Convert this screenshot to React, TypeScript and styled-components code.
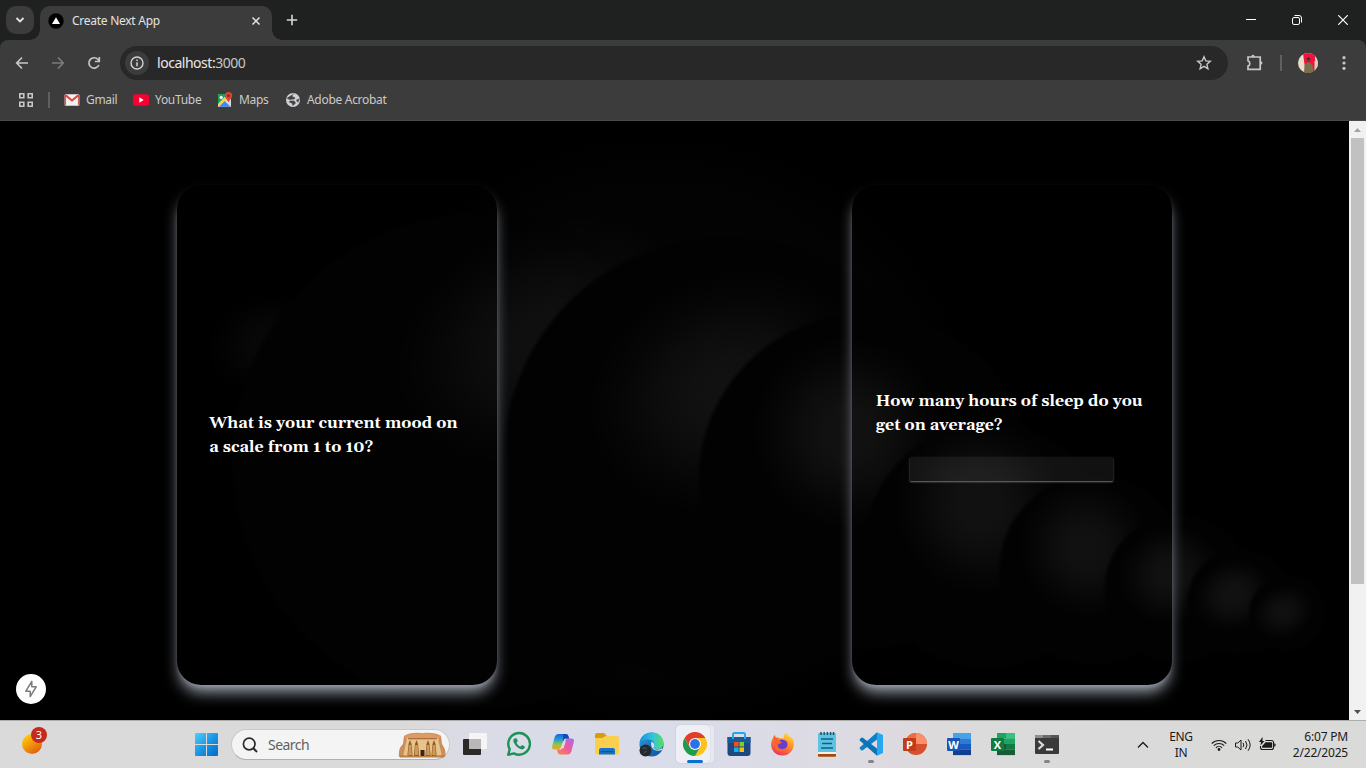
import React from "react";
import styled, { createGlobalStyle } from "styled-components";

const Global = createGlobalStyle`
  * { box-sizing: border-box; }
  body { margin: 0; background: #000; overflow: hidden; font-family: "Open Sans", "Noto Sans", sans-serif; }
  svg { display: block; flex: none; }
`;

const ui = `"Noto Sans", "Open Sans", sans-serif`;

const Screen = styled.div`
  width: 1366px;
  height: 768px;
  display: flex;
  flex-direction: column;
  overflow: hidden;
`;

/* ---------- browser chrome ---------- */
const TabStrip = styled.header`
  height: 40px;
  flex: none;
  background: #1f2120;
  display: flex;
  padding: 6px 0 0 6px;
`;
const TabSearch = styled.button`
  width: 28px;
  height: 28px;
  border: 0;
  padding: 0;
  border-radius: 10px;
  background: #3c3c3c;
  display: grid;
  place-items: center;
`;
const Tab = styled.div`
  position: relative;
  width: 232px;
  height: 34px;
  margin-left: 6px;
  padding: 0 10px 5px 8px;
  border-radius: 10px 10px 0 0;
  background: #3c3c3c;
  display: flex;
  align-items: center;
  &::before, &::after {
    content: "";
    position: absolute;
    bottom: 0;
    width: 10px;
    height: 10px;
  }
  &::before { left: -10px; background: radial-gradient(circle at 0 0, transparent 9.5px, #3c3c3c 10px); }
  &::after { right: -10px; background: radial-gradient(circle at 100% 0, transparent 9.5px, #3c3c3c 10px); }
`;
const TabTitle = styled.span`
  flex: 1;
  margin-left: 8px;
  font: 12px/16px ${ui};
  letter-spacing: -0.27px;
  color: #e3e3e3;
`;
const NewTab = styled.div`
  margin-left: 12px;
  height: 28px;
  display: flex;
  align-items: center;
`;
const WindowButtons = styled.div`
  margin-left: auto;
  height: 28px;
  display: flex;
`;
const WindowButton = styled.div`
  width: 46px;
  display: grid;
  place-items: center;
`;

const ToolbarBack = styled.div`
  flex: none;
  background: #1f2120;
`;
const Toolbar = styled.div`
  height: 81px;
  border-radius: 8px 8px 0 0;
  background: #3c3c3c;
  border-bottom: 1px solid #4b4b4b;
`;
const NavRow = styled.div`
  height: 46px;
  padding: 6px 0 6px 14px;
  display: flex;
  align-items: center;
`;
const NavButton = styled.div<{ $gap: number }>`
  margin-right: ${(p) => p.$gap}px;
`;
const AddressBar = styled.div`
  width: 1108px;
  height: 34px;
  flex: none;
  border-radius: 17px;
  background: #282828;
  display: flex;
  align-items: center;
  padding: 0 16px 0 5px;
`;
const InfoChip = styled.span`
  width: 24px;
  height: 24px;
  border-radius: 50%;
  background: #3c3c3c;
  display: grid;
  place-items: center;
`;
const Url = styled.span`
  flex: 1;
  margin-left: 8px;
  font: 14px/20px ${ui};
  letter-spacing: -0.47px;
  color: #e8e8e8;
  span { color: #c4c7c5; }
`;
const NavTail = styled.div`
  display: flex;
  align-items: center;
  margin-left: 17px;
`;
const Rule = styled.span<{ $left: number; $right: number }>`
  width: 2px;
  height: 16px;
  flex: none;
  background: #606060;
  margin: 0 ${(p) => p.$right}px 0 ${(p) => p.$left}px;
`;
const BookmarkRow = styled.div`
  height: 28px;
  display: flex;
  align-items: center;
  padding-left: 18px;
`;
const Bookmark = styled.div<{ $width: number }>`
  width: ${(p) => p.$width}px;
  display: flex;
  align-items: center;
  gap: 6px;
  font: 12px/16px ${ui};
  letter-spacing: -0.3px;
  color: #c9cbca;
  white-space: nowrap;
`;

/* ---------- page ---------- */
const Viewport = styled.div`
  height: 599px;
  flex: none;
  display: flex;
`;
const Page = styled.main`
  position: relative;
  width: 1349px;
  background: #000;
  overflow: hidden;
`;
const Backdrop = styled.div`
  position: absolute;
  inset: 0;
`;
const Cards = styled.div`
  position: relative;
  display: grid;
  grid-template-columns: 1fr 1fr;
  justify-items: center;
  padding-top: 64px;
`;
const Card = styled.section<{ $pad: number }>`
  width: 320px;
  height: 500px;
  padding: 0 ${(p) => p.$pad}px;
  border-radius: 24px;
  display: flex;
  flex-direction: column;
  justify-content: center;
  box-shadow: 0 10px 15px -3px #9ca3af, 0 4px 6px -4px #9ca3af;
`;
const Question = styled.h2`
  margin: 0;
  font: bold 16px/24px Gelasio, Georgia, "DejaVu Serif", serif;
  color: #fff;
  white-space: nowrap;
`;
const Answer = styled.input`
  width: 203px;
  height: 24px;
  margin: 20px auto 0 34px;
  border: 0;
  border-radius: 1px;
  background: rgba(255, 255, 255, 0.065);
  box-shadow: 0 1px 2px 0 #71718a;
  color: #fff;
`;
const DevBadge = styled.div`
  position: absolute;
  left: 16px;
  top: 553px;
  width: 30px;
  height: 30px;
  border-radius: 50%;
  background: #fff;
  display: grid;
  place-items: center;
`;
const ScrollBar = styled.div`
  width: 17px;
  background: #f1f1f1;
  display: flex;
  flex-direction: column;
  align-items: center;
`;
const ScrollArrow = styled.div`
  height: 17px;
  display: grid;
  place-items: center;
`;
const ScrollTrack = styled.div`
  flex: 1;
`;
const Thumb = styled.div`
  width: 13px;
  height: 446px;
  background: #c1c1c1;
`;

/* ---------- taskbar ---------- */
const Taskbar = styled.footer`
  height: 48px;
  flex: none;
  border-top: 1px solid #adadad;
  background: linear-gradient(90deg, #dadada 0, #dadada 400px, #dadbe6 470px, #d9dcea 680px, #dddbe3 830px, #dcdadb 940px, #dadad9 1366px);
  display: flex;
  align-items: flex-start;
`;
const Weather = styled.div`
  position: relative;
  width: 184px;
  height: 47px;
  padding: 13px 0 0 22px;
`;
const Sun = styled.div`
  width: 20px;
  height: 20px;
  border-radius: 50%;
  background: linear-gradient(145deg, #fdc70c 15%, #f08c0a 55%, #dd5b12 90%);
`;
const Count = styled.span`
  position: absolute;
  left: 31px;
  top: 6px;
  width: 16px;
  height: 16px;
  border-radius: 50%;
  background: #c42b1c;
  color: #fff;
  font: 11px/16px ${ui};
  text-align: center;
`;
const Slot = styled.div`
  position: relative;
  width: 44px;
  height: 46px;
  display: grid;
  place-items: center;
`;
const ActiveBack = styled.div`
  position: absolute;
  left: 3px;
  top: 4px;
  width: 38px;
  height: 38px;
  border-radius: 4px;
  background: #e8e9f0;
  box-shadow: 0 0 1px #b8b9c4;
  &::before {
    content: "";
    position: absolute;
    inset: 0 4px 0 0;
    border-radius: 4px;
    background: #eeeff5;
    box-shadow: 0 0 1px #a9aab8;
  }
`;
const Indicator = styled.i<{ $on?: boolean }>`
  position: absolute;
  bottom: 4px;
  left: ${(p) => (p.$on ? 14 : 19)}px;
  width: ${(p) => (p.$on ? 16 : 6)}px;
  height: 3px;
  border-radius: 2px;
  background: ${(p) => (p.$on ? "#0a6fd0" : "#858587")};
`;
const IconLayer = styled.div`
  position: relative;
`;
const SearchPill = styled.div`
  width: 219px;
  height: 31px;
  margin: 8px 2px 0 3px;
  border-radius: 16px;
  border: 1px solid #c9c9cb;
  border-bottom-color: #b0b0b3;
  background: #f4f4f4;
  display: flex;
  align-items: center;
  padding: 0 3px 0 10px;
  font: 14px/20px ${ui};
  letter-spacing: -0.55px;
  color: #5f5f5f;
  span { flex: 1; margin-left: 10px; }
`;
const Tray = styled.div`
  height: 47px;
  margin-left: auto;
  padding-right: 18px;
  display: flex;
  align-items: center;
  color: #1b1b1b;
  font: 12px/16px ${ui};
`;
const Language = styled.div`
  width: 32px;
  margin: 0 14px 0 16px;
  text-align: center;
  letter-spacing: -0.35px;
`;
const Clock = styled.div`
  width: 60px;
  margin-left: 12px;
  letter-spacing: -0.2px;
  white-space: nowrap;
  display: flex;
  flex-direction: column;
  align-items: flex-end;
`;
const Apps = styled.div`
  display: flex;
  margin-left: 1px;
`;

type Orb = { cx: number; cy: number; r: number; reach?: number; gx: number; gy: number; rx: number; ry: number; a: number };
const orbs: Orb[] = [
  { cx: 300, cy: 300, r: 0, reach: 200, gx: 266, gy: 222, rx: 62, ry: 52, a: 0.028 },
  { cx: 480, cy: 340, r: 250, reach: 400, gx: 548, gy: 220, rx: 160, ry: 118, a: 0.054 },
  { cx: 727, cy: 339, r: 226, gx: 728, gy: 270, rx: 145, ry: 118, a: 0.06 },
  { cx: 866, cy: 360, r: 170, gx: 848, gy: 312, rx: 96, ry: 98, a: 0.062 },
  { cx: 988, cy: 425, r: 125, gx: 980, gy: 385, rx: 86, ry: 92, a: 0.062 },
  { cx: 1094, cy: 449, r: 97, gx: 1086, gy: 427, rx: 68, ry: 72, a: 0.06 },
  { cx: 1178, cy: 468, r: 76, gx: 1170, gy: 453, rx: 54, ry: 50, a: 0.06 },
  { cx: 1240, cy: 481, r: 55, gx: 1233, gy: 474, rx: 42, ry: 36, a: 0.062 },
  { cx: 1287, cy: 492, r: 40, gx: 1283, gy: 491, rx: 32, ry: 27, a: 0.055 },
];

const Orbs = () => (
  <svg width="1349" height="599">
    <defs>
      <radialGradient id="haze">
        <stop offset="0" stopColor="#040404" />
        <stop offset=".8" stopColor="#030303" />
        <stop offset="1" stopColor="#000" />
      </radialGradient>
      <radialGradient id="glow">
        <stop offset="0" stopColor="#fff" />
        <stop offset=".25" stopColor="#fff" stopOpacity=".95" />
        <stop offset=".5" stopColor="#fff" stopOpacity=".66" />
        <stop offset=".75" stopColor="#fff" stopOpacity=".27" />
        <stop offset="1" stopColor="#fff" stopOpacity="0" />
      </radialGradient>
      {orbs.map((o, i) => (
        <React.Fragment key={i}>
          <clipPath id={`c${i}`}><circle cx={o.cx} cy={o.cy} r={o.reach ?? o.r - 1} /></clipPath>
          <radialGradient id={`b${i}`} gradientUnits="userSpaceOnUse" cx={o.cx} cy={o.cy} r={o.r}>
            <stop offset="0" stopColor="#020202" />
            <stop offset={o.r ? 1 - 5 / o.r : 0} stopColor="#020202" />
            <stop offset="1" stopColor="#020202" stopOpacity="0" />
          </radialGradient>
        </React.Fragment>
      ))}
    </defs>
    <ellipse cx="660" cy="310" rx="320" ry="300" fill="url(#haze)" />
    {orbs.map((o, i) => (
      <g key={i}>
        <circle cx={o.cx} cy={o.cy} r={o.r} fill={`url(#b${i})`} />
        <g clipPath={`url(#c${i})`}>
          <ellipse cx={o.gx} cy={o.gy} rx={o.rx} ry={o.ry} fill="url(#glow)" opacity={o.a} transform={`rotate(-25 ${o.gx} ${o.gy})`} />
        </g>
      </g>
    ))}
  </svg>
);

const stroke = (c: string, w = 1.6) => ({ fill: "none", stroke: c, strokeWidth: w });

const Avatar = () => (
  <svg width="20" height="20" viewBox="0 0 20 20">
    <clipPath id="av"><circle cx="10" cy="10" r="10" /></clipPath>
    <g clipPath="url(#av)">
      <rect width="20" height="20" fill="#e9dccb" />
      <path d="M5 0h12v5l1 8v7H8L6 8z" fill="#ee1240" />
      <path d="M16.500 8h4v12h-4z" fill="#d9cdb9" />
      <circle cx="10.500" cy="7" r="2" fill="#6a4032" />
      <path d="M6 20l.500-8 3-2.500h2l3 2.500 1 8z" fill="#76714a" />
      <path d="M8.300 6q2.200-3 4.400 0l-1 .3H9.300z" fill="#3a2320" />
    </g>
  </svg>
);

const Temple = () => (
  <svg width="48" height="26" viewBox="0 0 48 26">
    <path d="M1 25Q0 16 5 12L6 4Q12 0 24 1Q37 0 43 4L44 12Q49 19 47 25z" fill="#c98f5a" />
    <path d="M6 4Q24-2 43 4L41 7H8z" fill="#dd9a62" />
    <path d="M9 6h31l4 19H5z" fill="#e8c48a" />
    <path d="M10 6h29v1.300H10z" fill="#a9713f" />
    {[12, 18.5, 30, 36].map((x) => (
      <g key={x}>
        <path d={`M${x - 2.6} 24L${x - 1.5} 12L${x} 8l1.500 4l1.100 12z`} fill="#8f5b2a" />
        <path d={`M${x - 1.2} 13h2.400l.6 10h-3.600z`} fill="#cf9a58" />
      </g>
    ))}
    <path d="M22.500 18h4v7h-4z" fill="#3e2412" />
    <path d="M2 23q22 2 44 0v2.500H2z" fill="#ba8246" />
  </svg>
);

const WindowsLogo = () => (
  <svg width="23" height="23" viewBox="0 0 23 23">
    <defs>
      <linearGradient id="win" x1="0" y1="0" x2="1" y2="1">
        <stop stopColor="#4fd0fb" /><stop offset=".5" stopColor="#1a96e4" /><stop offset="1" stopColor="#0669c8" />
      </linearGradient>
    </defs>
    <path d="M1 0h10v11H0V1q0-1 1-1zM12 0h10q1 0 1 1v10H12zM0 12h11v11H1q-1 0-1-1zM12 12h11v10q0 1-1 1H12z" fill="url(#win)" />
  </svg>
);

const TaskView = () => (
  <svg width="24" height="22" viewBox="0 0 24 22">
    <rect y="6" width="18" height="16" rx="1" fill="#2b2a29" />
    <rect x="6" width="18" height="16" rx="1" fill="#f5f5f5" />
    <path d="M6 6h12v10H6z" fill="#b9b8b7" />
  </svg>
);

const WhatsApp = () => (
  <svg width="26" height="26" viewBox="0 0 26 26">
    <path d="M2.200 23.800l1.500-5.600A10.800 10.800 0 1 1 8 22.400z" {...stroke("#1d9158", 2.4)} strokeLinejoin="round" />
    <path d="M9.300 7.200c-1.900.2-2.500 2.300-1.500 4.300 1.500 3.300 4 5.900 7.400 6.800 2.100.5 3.700-.7 3.600-2.700l-2.700-1.500-1.600 1.500c-2-.8-3.200-2-4-3.900l1.300-1.400-1-2.800z" fill="#1d9158" />
  </svg>
);

const Copilot = () => (
  <svg width="22" height="22" viewBox="0 0 24 24">
    <defs>
      <linearGradient id="cp1" x1="0" y1="0" x2="0" y2="1"><stop stopColor="#1a62d8" /><stop offset=".35" stopColor="#1d9bd8" /><stop offset=".65" stopColor="#8ac64a" /><stop offset="1" stopColor="#f9a11b" /></linearGradient>
      <linearGradient id="cp2" x1="1" y1="0" x2="0" y2="1"><stop stopColor="#b066ee" /><stop offset=".5" stopColor="#ee5a9d" /><stop offset="1" stopColor="#fb8b42" /></linearGradient>
    </defs>
    <path d="M7 1h8q2 0 2.700 2l1 3h-4q-1.500 0-2 1.700L9.800 15.500Q9 18 6.500 18H3Q-.7 18 .3 14L3 4Q4 1 7 1z" fill="url(#cp1)" />
    <path d="M17 23.500H9q-2 0-2.700-2l-1-3.500h4q1.500 0 2-1.700L14.200 9Q15 6 17.500 6H21q3.700 0 2.700 4L21 20.500q-1 3-4 3z" fill="url(#cp2)" />
    <path d="M12 1h3q2 0 2.700 2l1 3h-4q-1.500 0-2 1.700L12 10z" fill="#1746b8" />
    <path d="M13.700 9L11.300 16.500" {...stroke("#dcdce9", 2.6)} />
  </svg>
);

const Explorer = () => (
  <svg width="24" height="22" viewBox="0 0 24 22">
    <path d="M0 2q0-2 2-2h7l3 3v4H0z" fill="#dc9a0e" />
    <path d="M9 4l2-1h11q2 0 2 2v15q0 1.500-1.500 1.500h-21Q0 21.500 0 20V5h7z" fill="#fbcf4e" />
    <path d="M4 21.500V17q0-2 2-2h12q2 0 2 2v4.500z" fill="#1473ca" />
    <path d="M6 18h12v1.200H6z" fill="#0c509b" />
  </svg>
);

const Edge = () => (
  <svg width="25" height="25" viewBox="0 0 25 25">
    <defs>
      <linearGradient id="ed1"><stop stopColor="#1a90d8" /><stop offset=".55" stopColor="#30c4dc" /><stop offset="1" stopColor="#5ddc62" /></linearGradient>
      <linearGradient id="ed2" x1="0" y1="0" x2="1" y2="1"><stop stopColor="#2c9ee0" /><stop offset="1" stopColor="#0c4c9c" /></linearGradient>
    </defs>
    <circle cx="12.500" cy="12.500" r="12" fill="url(#ed2)" />
    <path d="M.5 11.500C1 5 6 .5 12.500.5 20 .5 24.500 5.500 24.500 11c0 4-3 6.500-6.500 6.500-2.500 0-4-1-3.500-2.200C17 12 14 7.500 9.500 7.500 4.500 7.500 1.500 9.500.5 11.500z" fill="url(#ed1)" />
    <path d="M12.500 9.500c3.500 2 3.500 4.500 2 6-.4 1.300 1.500 2.300 4 2.200 2 0 4-.8 5-2.200l-.5 2.500c-4 1.700-9.500.5-10.500-3.500-.6-2 -.5-3.500 0-5z" fill="#d9dcea" />
    <circle cx="6.500" cy="18.500" r="6" fill="#26292d" />
    <path d="M3.500 16.500l2.500-.8 2 1.500M5 20.500l2.500-1" {...stroke("#555d5e", 1)} />
  </svg>
);

const Chrome = () => (
  <svg width="24" height="24" viewBox="0 0 48 48">
    <path d="M24 12h20.800A24 24 0 0 1 24 48l10.400-18z" fill="#fcc31e" />
    <path d="M13.600 30L3.200 12A24 24 0 0 0 24 48l10.400-18z" fill="#229a4c" />
    <path d="M3.200 12A24 24 0 0 1 44.800 12H24L13.600 30z" fill="#e33b2e" />
    <circle cx="24" cy="24" r="12" fill="#fff" />
    <circle cx="24" cy="24" r="9.800" fill="#2a72e8" />
  </svg>
);

const Store = () => (
  <svg width="24" height="24" viewBox="0 0 24 24">
    <path d="M.5 5h23v16q0 3-3 3h-17q-3 0-3-3z" fill="#1d477f" />
    <path d="M.5 5h23v6H.5z" fill="#185a98" />
    <path d="M6 7V2.500Q6 1 7.500 1h9Q18 1 18 2.500V7" {...stroke("#22a7ea", 2)} />
    <path d="M7 10h4.600v4.500H7z" fill="#f1511b" /><path d="M12.500 10H17v4.500h-4.500z" fill="#80cc28" />
    <path d="M7 15.400h4.600V20H7z" fill="#14adef" /><path d="M12.500 15.400H17V20h-4.500z" fill="#fbbc09" />
  </svg>
);

const Firefox = () => (
  <svg width="24" height="24" viewBox="0 0 24 24">
    <defs>
      <linearGradient id="ff" x1=".8" y1="0" x2=".3" y2="1"><stop stopColor="#ffe63e" /><stop offset=".4" stopColor="#ff9a28" /><stop offset="1" stopColor="#ef2f55" /></linearGradient>
    </defs>
    <path d="M15 .5c1 2 4 3 5 5.500l.5-1c3 4 3 9 1 12.500A11.500 11.500 0 0 1 1 17C-.6 13 0 8.500 2.500 5l.8-2 1.500 2.500L8 6c1.500-.3 3.500 0 4.500.8C12.500 4 13.500 2 15 .5z" fill="url(#ff)" />
    <path d="M7.500 9c2-2.500 6.500-2 8.500 1 1.500 3.500-.5 7-4.500 7-3 0-5-1.800-4.800-4.500z" fill="#6c3cc8" />
    <path d="M2.500 5l.8-2 1.500 2.500L8 6 7 8.500l4 1.500-1 1.200-3.500 1.300C6 16 9.500 19 13 18.500 8 22 1 18 2.500 5z" fill="#f9652f" />
  </svg>
);

const Notepad = () => (
  <svg width="18" height="25" viewBox="0 0 18 25">
    <rect y="1" width="18" height="20" rx="1" fill="#5cc3e2" />
    <path d="M0 20h18v2H0z" fill="#f6f1e9" /><path d="M0 22h18v2q0 .7-1 .7H1q-1 0-1-.7z" fill="#a34a0a" />
    <path d="M3 0v3M6.200 0v3M9.400 0v3M12.600 0v3M15.500 0v3" {...stroke("#14566f", 1.5)} />
    <path d="M3 7h12M4 11.500h10M3 16h12" {...stroke("#105f83", 1.6)} />
  </svg>
);

const VSCode = () => (
  <svg width="24" height="24" viewBox="0 0 24 24">
    <path d="M18 .3L1 15.200q-1 .9 0 1.800l1.300 1.200q.7.500 1.500 0L18 7.500z" fill="#0f7fca" />
    <path d="M18 23.700L1 8.800Q0 8 1 7l1.300-1.200q.7-.5 1.500 0L18 16.500z" fill="#0b72b8" />
    <path d="M18 .3L24 3v18l-6 2.700z" fill="#27a6f1" />
  </svg>
);

const OfficeLetter = styled.span<{ $c: string }>`
  position: absolute;
  left: 0;
  top: 6px;
  width: 13px;
  height: 13px;
  border-radius: 1px;
  background: ${(p) => p.$c};
  color: #fff;
  font: bold 11px/13px "Open Sans", sans-serif;
  text-align: center;
`;
const OfficeBox = styled.div`
  position: relative;
  width: 24px;
  height: 24px;
`;

const PowerPoint = () => (
  <OfficeBox>
    <svg width="24" height="24" viewBox="0 0 24 24">
      <circle cx="13" cy="12" r="11" fill="#d6502e" />
      <path d="M13 12V1a11 11 0 0 0-11 11z" fill="#ed6c47" />
      <path d="M13 12V1a11 11 0 0 1 11 11z" fill="#fd8f6b" />
    </svg>
    <OfficeLetter $c="#c13c1b">P</OfficeLetter>
  </OfficeBox>
);
const Sheet = ({ colors, letter, c }: { colors: string[]; letter: string; c: string }) => (
  <OfficeBox>
    <svg width="24" height="24" viewBox="0 0 24 24">
      {colors.map((f, i) => (
        <rect key={i} x="6" y={1 + i * 5.5} width="18" height="5.600" fill={f} />
      ))}
      {letter === "X" && <path d="M15 1h9v5.500h-9z" fill="#34c481" />}
      {letter === "X" && <path d="M6 12h9v5.500H6z" fill="#155b36" />}
    </svg>
    <OfficeLetter $c={c}>{letter}</OfficeLetter>
  </OfficeBox>
);

const Terminal = () => (
  <svg width="24" height="19" viewBox="0 0 24 19">
    <rect width="24" height="19" rx="1" fill="#3a3a3a" />
    <path d="M0 3V1q0-1 1-1h7v3z" fill="#8f8f8f" /><path d="M8 0h8v3H8z" fill="#6b6b6b" /><path d="M16 0h7q1 0 1 1v2h-8z" fill="#555" />
    <path d="M3.500 6l4.500 4-4.500 4" {...stroke("#ddd", 2.2)} /><path d="M11 14.500h7" {...stroke("#fff", 2)} />
  </svg>
);

const apps: { icon: React.ReactNode; open?: boolean; active?: boolean }[] = [
  { icon: <TaskView /> },
  { icon: <WhatsApp /> },
  { icon: <Copilot /> },
  { icon: <Explorer /> },
  { icon: <Edge /> },
  { icon: <Chrome />, active: true },
  { icon: <Store /> },
  { icon: <Firefox /> },
  { icon: <Notepad /> },
  { icon: <VSCode />, open: true },
  { icon: <PowerPoint /> },
  { icon: <Sheet letter="W" c="#1a56b8" colors={["#41a5ee", "#2b7cd3", "#185abd", "#103f91"]} /> },
  { icon: <Sheet letter="X" c="#107c41" colors={["#21a366", "#21a366", "#107c41", "#185c37"]} /> },
  { icon: <Terminal />, open: true },
];

export default function App() {
  return (
    <Screen>
      <Global />
      <TabStrip>
        <TabSearch>
          <svg width="10" height="10" viewBox="0 0 10 10"><path d="M1.500 3l3.500 3.500L8.500 3" {...stroke("#e3e3e3", 1.8)} /></svg>
        </TabSearch>
        <Tab>
          <svg width="16" height="16" viewBox="0 0 16 16">
            <circle cx="8" cy="8" r="7.700" fill="#000" /><path d="M8 4.200l4 6.800H4z" fill="#fff" />
          </svg>
          <TabTitle>Create Next App</TabTitle>
          <svg width="12" height="12" viewBox="0 0 12 12"><path d="M2.500 2.500l7 7M9.500 2.500l-7 7" {...stroke("#e3e3e3", 1.5)} /></svg>
        </Tab>
        <NewTab>
          <svg width="16" height="16" viewBox="0 0 16 16"><path d="M8 2.800v10.400M2.800 8h10.400" {...stroke("#d6d8d7", 1.6)} /></svg>
        </NewTab>
        <WindowButtons>
          <WindowButton><svg width="10" height="10"><path d="M0 4.500h10" {...stroke("#fff", 1)} /></svg></WindowButton>
          <WindowButton>
            <svg width="10" height="10" viewBox="0 0 10 10"><rect x=".5" y="2.500" width="7" height="7" rx="1.500" {...stroke("#fff", 1)} /><path d="M2.500.5H7Q9.500.5 9.500 3v4.500" {...stroke("#fff", 1)} /></svg>
          </WindowButton>
          <WindowButton><svg width="10" height="10" viewBox="0 0 10 10"><path d="M.2.200l9.600 9.600M9.800.2l-9.600 9.600" {...stroke("#fff", 1.2)} /></svg></WindowButton>
        </WindowButtons>
      </TabStrip>

      <ToolbarBack>
        <Toolbar>
          <NavRow>
            <NavButton $gap={20}><svg width="16" height="16" viewBox="0 0 16 16"><path d="M14 8H3M8 2.500L2.700 8 8 13.500" {...stroke("#c7c7c7", 1.7)} /></svg></NavButton>
            <NavButton $gap={20}><svg width="16" height="16" viewBox="0 0 16 16"><path d="M2 8h11M8 2.500L13.300 8 8 13.500" {...stroke("#7b7b7b", 1.7)} /></svg></NavButton>
            <NavButton $gap={18}>
              <svg width="16" height="16" viewBox="0 0 16 16"><path d="M12.900 10A5.200 5.200 0 1 1 12 4.500l1.400 1.600" {...stroke("#c7c7c7", 1.7)} /><path d="M13.300 2v4.500H8.900" {...stroke("#c7c7c7", 1.7)} /></svg>
            </NavButton>
            <AddressBar>
              <InfoChip>
                <svg width="16" height="16" viewBox="0 0 16 16"><circle cx="8" cy="8" r="6" {...stroke("#d2d2d2", 1.4)} /><path d="M8 7.200v4M8 4.600v1.500" {...stroke("#d2d2d2", 1.5)} /></svg>
              </InfoChip>
              <Url>localhost:<span>3000</span></Url>
              <svg width="16" height="16" viewBox="0 0 16 16"><path d="M8 1.800l1.800 4.100 4.500.4-3.400 3 1 4.400L8 11.400l-3.900 2.300 1-4.400-3.400-3 4.500-.4z" {...stroke("#c7c7c7", 1.4)} /></svg>
            </AddressBar>
            <NavTail>
              <svg width="20" height="20" viewBox="0 0 20 20">
                <path d="M3 4h4.200V3.200q.8-1.200 1.600 0V4h6.400v5.200h.8q1.200.8 0 1.600h-.8V16.300H3v-3.200c2.400-.8 2.400-4.600 0-5.400z" {...stroke("#c7c7c7", 1.7)} />
              </svg>
              <Rule $left={15} $right={16} />
              <Avatar />
              <svg width="52" height="16" viewBox="0 0 52 16"><g fill="#c7c7c7"><circle cx="26" cy="2.700" r="1.600" /><circle cx="26" cy="8" r="1.600" /><circle cx="26" cy="13.300" r="1.600" /></g></svg>
            </NavTail>
          </NavRow>
          <BookmarkRow>
            <svg width="16" height="16" viewBox="0 0 16 16"><path d="M1.800 1.800h4v4h-4zM10.200 1.800h4v4h-4zM1.800 10.200h4v4h-4zM10.200 10.200h4v4h-4z" {...stroke("#c7c7c7", 1.6)} /></svg>
            <Rule $left={14} $right={14} />
            <Bookmark $width={69}>
              <svg width="16" height="16" viewBox="0 0 16 16"><rect x=".7" y="2.200" width="14.600" height="11.600" rx="1" fill="#f1f1f1" /><path d="M1.300 13V3.500M14.700 13V3.500" {...stroke("#c9625a", 1.5)} /><path d="M1.300 3L8 8.500 14.700 3" {...stroke("#e04438", 2.1)} /></svg>
              Gmail
            </Bookmark>
            <Bookmark $width={84}>
              <svg width="16" height="16" viewBox="0 0 16 16"><rect y="2.200" width="16" height="11.600" rx="2.500" fill="#f8002f" /><path d="M6.300 5.300L10.700 8l-4.400 2.700z" fill="#fff" /></svg>
              YouTube
            </Bookmark>
            <Bookmark $width={68}>
              <svg width="16" height="16" viewBox="0 0 16 16"><path d="M1 2h13v12.800H1z" fill="#d8dad9" /><path d="M1 3q0-1 1-1h8.500L1 12z" fill="#1e9d58" /><path d="M2 14.800L7.500 9l6 5.800z" fill="#4285f4" /><path d="M1 13l8-8.500 1.500 1.500-8.500 8.800z" fill="#fdd041" /><circle cx="4.200" cy="5.500" r="1.700" fill="#dff5e6" /><path d="M11.500 0a3.700 3.700 0 0 1 3.700 3.700c0 2-2.200 3.500-3.700 6.600C10 7.200 7.800 5.700 7.800 3.700A3.700 3.700 0 0 1 11.500 0z" fill="#db4437" /><circle cx="11.500" cy="3.700" r="1.300" fill="#7b231e" /></svg>
              Maps
            </Bookmark>
            <Bookmark $width={120}>
              <svg width="16" height="16" viewBox="0 0 16 16"><circle cx="8" cy="8" r="7" fill="#cdcfd3" /><path d="M9 1.500Q6 3 7.500 5l2 .5q1 2-1.500 1.500L4.500 7.500 2 6M5 9h4l1.500 2L8 13.500 7 11 4 10M14.500 7L11.500 8 13 10.500" fill="#414244" stroke="#414244" strokeWidth=".6" /></svg>
              Adobe Acrobat
            </Bookmark>
          </BookmarkRow>
        </Toolbar>
      </ToolbarBack>

      <Viewport>
        <Page>
          <Backdrop><Orbs /></Backdrop>
          <Cards>
            <Card $pad={32}>
              <Question>What is your current mood on<br />a scale from 1 to 10?</Question>
            </Card>
            <Card $pad={24}>
              <Question>How many hours of sleep do you<br />get on average?</Question>
              <Answer />
            </Card>
          </Cards>
          <DevBadge>
            <svg width="18" height="18" viewBox="0 0 18 18"><path d="M9.800 1.500v5.300h4.400L8.200 16.500v-5.300H3.800z" {...stroke("#7d7d7d", 1.5)} strokeLinejoin="round" /></svg>
          </DevBadge>
        </Page>
        <ScrollBar>
          <ScrollArrow><svg width="7" height="4"><path d="M0 4l3.500-4L7 4z" fill="#a3a3a3" /></svg></ScrollArrow>
          <ScrollTrack><Thumb /></ScrollTrack>
          <ScrollArrow><svg width="7" height="4"><path d="M0 0l3.500 4L7 0z" fill="#505050" /></svg></ScrollArrow>
        </ScrollBar>
      </Viewport>

      <Taskbar>
        <Weather><Sun /><Count>3</Count></Weather>
        <Slot><WindowsLogo /></Slot>
        <SearchPill>
          <svg width="16" height="16" viewBox="0 0 16 16"><circle cx="7.200" cy="7" r="5.800" {...stroke("#2a2a2a", 1.7)} /><path d="M11.300 11.200l3.700 3.800" {...stroke("#2a2a2a", 2)} /></svg>
          <span>Search</span>
          <Temple />
        </SearchPill>
        <Apps>
          {apps.map((a, i) => (
            <Slot key={i}>
              {a.active && <ActiveBack />}
              <IconLayer>{a.icon}</IconLayer>
              {(a.active || a.open) && <Indicator $on={a.active} />}
            </Slot>
          ))}
        </Apps>
        <Tray>
          <svg width="12" height="12" viewBox="0 0 12 12"><path d="M1 8.500l5-5 5 5" {...stroke("#1b1b1b", 1.3)} /></svg>
          <Language>ENG<br />IN</Language>
          <svg width="16" height="16" viewBox="0 0 16 16">
            <path d="M.7 6.500a10.300 10.300 0 0 1 14.600 0M2.800 8.700a7.300 7.300 0 0 1 10.400 0M4.900 10.800a4.400 4.400 0 0 1 6.200 0" {...stroke("#1b1b1b", 1.1)} /><circle cx="8" cy="12.500" r="1.400" fill="#1b1b1b" />
          </svg>
          <svg width="32" height="16" viewBox="0 0 32 16">
            <path d="M8.500 6h2.300L14 3v10l-3.200-3H8.500z" {...stroke("#1b1b1b", 1)} strokeLinejoin="round" />
            <path d="M16 5.800q1.600 2.200 0 4.400M18.500 4q3 4 0 8M21 2.200q4.300 5.800 0 11.600" {...stroke("#1b1b1b", 1)} />
          </svg>
          <svg width="17" height="16" viewBox="0 0 17 16">
            <path d="M6.500 3.500h6q2 0 2 2v5q0 2-2 2h-9q-2 0-2-2V9" {...stroke("#1b1b1b", 1.1)} />
            <path d="M6.500 5.200h5.800q.8 0 .8.800v4q0 .8-.8.800H3.800q-.8 0-.8-.8V9.200z" fill="#1b1b1b" />
            <path d="M15.200 6.300q1.500 0 1.500 1.700t-1.500 1.700zM3.500 0L0 5h2l-.5 3.500L5.500 4h-2z" fill="#1b1b1b" />
          </svg>
          <Clock><span>6:07 PM</span><span>2/22/2025</span></Clock>
        </Tray>
      </Taskbar>
    </Screen>
  );
}
